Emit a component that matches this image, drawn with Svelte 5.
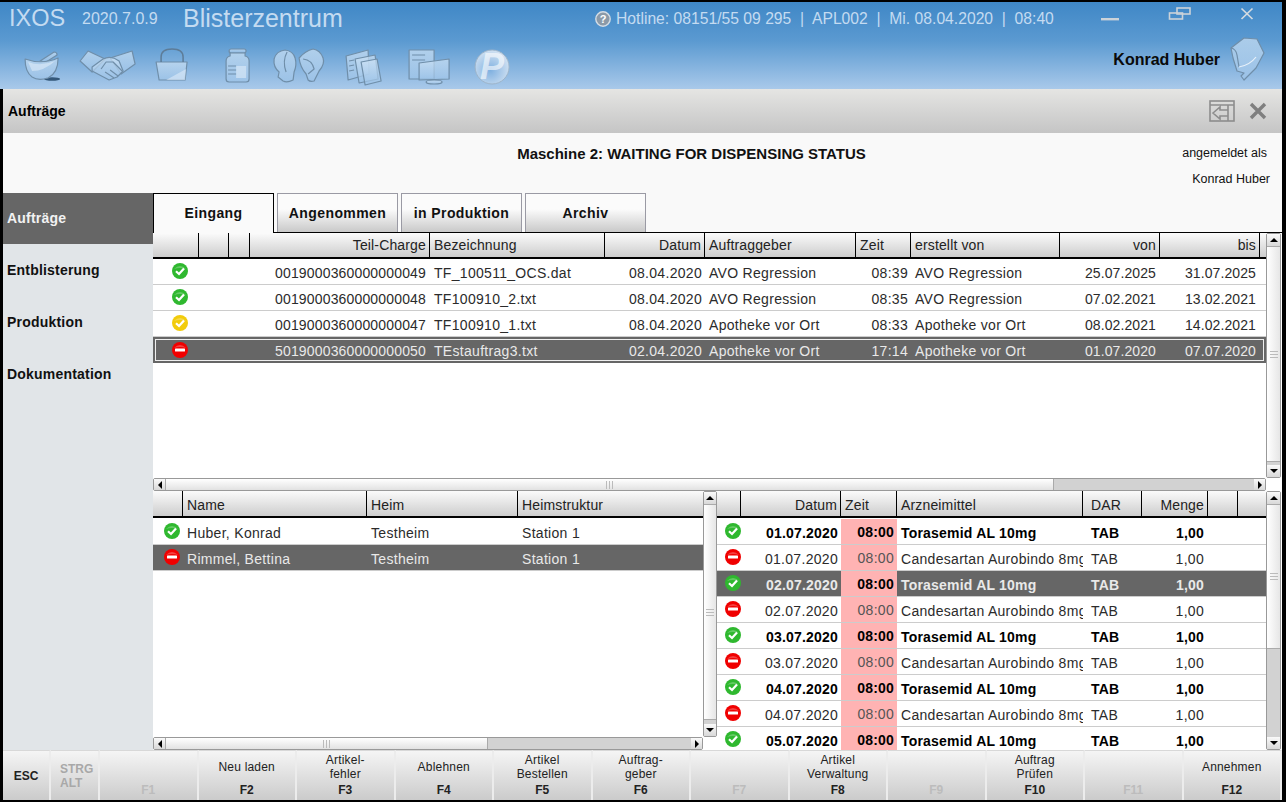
<script>
  const sideItems = ["Aufträge", "Entblisterung", "Produktion", "Dokumentation"];
  const tabs = ["Eingang", "Angenommen", "in Produktion", "Archiv"];

  const orders = [
    { st: "ok", charge: "0019000360000000049", name: "TF_100511_OCS.dat", datum: "08.04.2020", from: "AVO Regression", zeit: "08:39", by: "AVO Regression", von: "25.07.2025", bis: "31.07.2025" },
    { st: "ok", charge: "0019000360000000048", name: "TF100910_2.txt", datum: "08.04.2020", from: "AVO Regression", zeit: "08:35", by: "AVO Regression", von: "07.02.2021", bis: "13.02.2021" },
    { st: "warn", charge: "0019000360000000047", name: "TF100910_1.txt", datum: "08.04.2020", from: "Apotheke vor Ort", zeit: "08:33", by: "Apotheke vor Ort", von: "08.02.2021", bis: "14.02.2021" },
    { st: "no", charge: "5019000360000000050", name: "TEstauftrag3.txt", datum: "02.04.2020", from: "Apotheke vor Ort", zeit: "17:14", by: "Apotheke vor Ort", von: "01.07.2020", bis: "07.07.2020", sel: true }
  ];

  const patients = [
    { st: "ok", name: "Huber, Konrad", heim: "Testheim", station: "Station 1" },
    { st: "no", name: "Rimmel, Bettina", heim: "Testheim", station: "Station 1", sel: true }
  ];

  const doses = [
    { st: "ok", datum: "01.07.2020", med: "Torasemid AL 10mg", bold: true },
    { st: "no", datum: "01.07.2020", med: "Candesartan Aurobindo 8mg" },
    { st: "ok", datum: "02.07.2020", med: "Torasemid AL 10mg", bold: true, sel: true },
    { st: "no", datum: "02.07.2020", med: "Candesartan Aurobindo 8mg" },
    { st: "ok", datum: "03.07.2020", med: "Torasemid AL 10mg", bold: true },
    { st: "no", datum: "03.07.2020", med: "Candesartan Aurobindo 8mg" },
    { st: "ok", datum: "04.07.2020", med: "Torasemid AL 10mg", bold: true },
    { st: "no", datum: "04.07.2020", med: "Candesartan Aurobindo 8mg" },
    { st: "ok", datum: "05.07.2020", med: "Torasemid AL 10mg", bold: true }
  ];

  const keys = [
    { k: "F1" },
    { k: "F2", l: ["Neu laden"] },
    { k: "F3", l: ["Artikel-", "fehler"] },
    { k: "F4", l: ["Ablehnen"] },
    { k: "F5", l: ["Artikel", "Bestellen"] },
    { k: "F6", l: ["Auftrag-", "geber"] },
    { k: "F7" },
    { k: "F8", l: ["Artikel", "Verwaltung"] },
    { k: "F9" },
    { k: "F10", l: ["Auftrag", "Prüfen"] },
    { k: "F11" },
    { k: "F12", l: ["Annehmen"] }
  ];
</script>

{#snippet status(st)}
  <svg class="status" viewBox="0 0 18 18" width="18" height="18">
    <circle cx="9" cy="9" r="8" fill={st === "ok" ? "#2fb82f" : st === "warn" ? "#f2cc0c" : "#f00000"} />
    <path d="M3 7 Q9 1 15 7 Q9 5 3 7Z" fill="#fff" opacity=".25" />
    {#if st === "no"}
      <rect x="4" y="7.4" width="10" height="3.2" rx=".6" fill="#fff" />
    {:else}
      <path d="M5 9.2 L8 12 L13 6.4" fill="none" stroke="#fff" stroke-width="2.2" />
    {/if}
  </svg>
{/snippet}

{#snippet vbar(thumb)}
  <div class="vbar">
    <div class="btn"><i class="up"></i></div>
    <div class="thumb" style="height:{thumb}px"><b class="grip-h"></b></div>
    <div class="rest"></div>
    <div class="btn"><i class="down"></i></div>
  </div>
{/snippet}

{#snippet hbar(thumb)}
  <div class="hbar">
    <div class="btn"><i class="left"></i></div>
    <div class="thumb" style="width:{thumb}px"><b class="grip-v"></b></div>
    <div class="rest"></div>
    <div class="btn"><i class="right"></i></div>
  </div>
{/snippet}

<div class="app">
  <svg class="defs" width="0" height="0">
    <defs>
      <linearGradient id="glass" x1="0" y1="0" x2="0" y2="1">
        <stop offset="0" stop-color="#cfe3f5" />
        <stop offset="1" stop-color="#9cc3e8" />
      </linearGradient>
      <radialGradient id="ball" cx=".45" cy=".6" r=".7">
        <stop offset="0" stop-color="#7fb0e0" />
        <stop offset="1" stop-color="#dfeaf5" />
      </radialGradient>
    </defs>
  </svg>

  <header class="head">
    <div class="titlerow">
      <span class="brand">IXOS</span>
      <span class="version">2020.7.0.9</span>
      <span class="module">Blisterzentrum</span>
      <span class="info">
        <svg viewBox="0 0 16 16" width="16" height="16">
          <circle cx="8" cy="8" r="7.2" fill="#8b9aa8" stroke="#d5dde5" stroke-width="1.4" />
          <text x="8" y="12" text-anchor="middle" class="qmark">?</text>
        </svg>
        Hotline: 08151/55 09 295 &nbsp;|&nbsp; APL002 &nbsp;|&nbsp; Mi. 08.04.2020 &nbsp;|&nbsp; 08:40
      </span>
      <div class="winctl">
        <svg viewBox="0 0 20 14" width="20" height="14"><rect x="1" y="11" width="18" height="2.4" fill="#ccd3d9" /></svg>
        <svg viewBox="0 0 24 14" width="24" height="14" fill="none" stroke="#ccd3d9" stroke-width="1.6"><rect x="9" y="1" width="13" height="6" /><rect x="1.5" y="6" width="13" height="6" /></svg>
        <svg viewBox="0 0 14 14" width="14" height="14" stroke="#d5dbe0" stroke-width="1.7"><path d="M1.5 1.5 L12.5 12 M12.5 1.5 L1.5 12" /></svg>
      </div>
    </div>
    <div class="iconrow">
      <nav class="apps">
        <svg viewBox="0 0 64 40">
          <ellipse class="shadow" cx="42" cy="32" rx="8" ry="1.8" />
          <path d="M30 14 L44 5 Q47 5 47 8 L36 15Z" />
          <path d="M15 12 Q32 18 48 11 Q48 26 38 31 Q28 34 22 30 Q15 25 15 12Z" />
          <path class="sheen" d="M18 15 Q30 20 45 14 Q34 24 22 24Z" />
        </svg>
        <svg viewBox="0 0 64 40">
          <path d="M6 14 L14 4 L31 12 L18 25Z" />
          <path d="M36 11 L58 4 L61 17 L47 27Z" />
          <path d="M18 20 L29 12 Q37 8 45 14 L49 24 L43 30 L35 33 L18 24Z" />
          <path class="line" d="M27 22 L32 15 L39 15 L48 24 M31 25 L40 31 M36 23 L44 29" />
        </svg>
        <svg viewBox="0 0 64 40">
          <path d="M18 15 H49 L47 33 H21Z" />
          <path class="sheen" d="M28 33 L48 22 L47 33Z" />
          <path class="line thin" d="M23 15 V10 Q23 2 34 2 Q45 2 45 10 V15" />
        </svg>
        <svg viewBox="0 0 64 40">
          <rect x="26" y="2" width="17" height="4" rx="2" />
          <path d="M27 6 H42 V9 Q46 10 46 14 V32 Q46 35 43 35 H26 Q23 35 23 32 V14 Q23 10 27 9Z" />
          <rect class="sheen" x="33" y="19" width="10" height="12" />
          <path class="line" d="M25 19 H33 M25 23 H33 M25 27 H33" />
        </svg>
        <svg viewBox="0 0 64 40">
          <path d="M7 12 Q9 4 18 3 Q26 4 28 11 Q30 18 27 25 L26 33 Q20 36 16 34 L11 30 L12 25 Q6 20 7 12Z" />
          <path class="line" d="M20 5 Q15 14 19 25" />
          <path d="M32 11 Q38 4 46 2 Q53 3 56 11 Q58 17 52 24 L47 34 Q43 35 41 33 L39 27 Q33 20 32 11Z" />
          <path class="line" d="M36 12 Q45 13 47 22 L41 27" />
        </svg>
        <svg viewBox="0 0 64 40">
          <path d="M15 9 L37 3 L38 27 L17 33Z" />
          <path d="M24 12 L44 8 L47 32 L28 36Z" />
          <path d="M30 15 L46 12 L50 34 L34 38Z" />
          <path class="line" d="M18 14 L23 13 M18 19 L23 18 M18 24 L23 23" />
        </svg>
        <svg viewBox="0 0 64 40">
          <rect x="14" y="3" width="25" height="29" />
          <path class="line" d="M17 8 H30 M17 13 H30" />
          <path d="M24 16 L54 12 V32 L24 33Z" />
          <ellipse cx="39" cy="35" rx="8" ry="2" />
        </svg>
        <svg viewBox="0 0 64 40">
          <circle class="pball" cx="33" cy="20" r="17" />
          <text x="33" y="32" text-anchor="middle" class="plogo">P</text>
        </svg>
      </nav>
      <div class="user">
        <span>Konrad Huber</span>
        <svg viewBox="0 0 36 44" width="36" height="44" class="avatar">
          <path d="M1 11 L14 1 L27 2 L34 16 L26 31 L14 43 L11 39 L14 36 L7 34 L3 21Z" />
          <path class="line" d="M1 11 Q6 12 7 18 L9 30" />
          <path class="line light" d="M9 30 Q20 28 26 20" />
        </svg>
      </div>
    </div>
  </header>

  <div class="main">
    <div class="toolbar">
      <strong>Aufträge</strong>
      <div class="toolicons">
        <svg viewBox="0 0 26 22" width="26" height="22" fill="none" stroke="#8d8d8d" stroke-width="1.6">
          <rect x="1" y="1" width="24" height="20" />
          <path d="M1 5 H25 M19 5 V21 M4 13 L11 7 V10 H19 V16 H11 V19Z" />
        </svg>
        <svg viewBox="0 0 18 18" width="18" height="18" stroke="#7f7f7f" stroke-width="3.4"><path d="M2 2 L16 16 M16 2 L2 16" /></svg>
      </div>
    </div>

    <div class="statusline">
      <h1>Maschine 2: WAITING FOR DISPENSING STATUS</h1>
      <div class="login">
        <span>angemeldet als</span>
        <span>Konrad Huber</span>
      </div>
    </div>

    <div class="work">
      <aside class="side">
        {#each sideItems as item, i}
          <div class="sideitem" class:active={i === 0}>{item}</div>
        {/each}
      </aside>

      <section class="content">
        <div class="tabs">
          {#each tabs as tab, i}
            <div class="tab" class:on={i === 0}>{tab}</div>
          {/each}
        </div>

        <div class="upper">
          <div class="table">
            <div class="row header orders">
              <span></span><span></span><span></span>
              <span class="r">Teil-Charge</span><span>Bezeichnung</span><span class="r">Datum</span>
              <span>Auftraggeber</span><span>Zeit</span><span>erstellt von</span>
              <span class="r">von</span><span class="r">bis</span><span></span>
            </div>
            {#each orders as o}
              <div class="row orders" class:sel={o.sel} class:framed={o.sel}>
                <span class="ic">{@render status(o.st)}</span><span></span><span></span>
                <span class="r charge">{o.charge}</span><span>{o.name}</span><span class="r">{o.datum}</span>
                <span>{o.from}</span><span class="r">{o.zeit}</span><span>{o.by}</span>
                <span class="r range">{o.von}</span><span class="r range">{o.bis}</span><span></span>
              </div>
            {/each}
          </div>
          {@render vbar(216)}
          {@render hbar(889)}
        </div>

        <div class="lower">
          <div class="leftpane">
            <div class="leftrow">
              <div class="table">
                <div class="row header people">
                  <span></span><span>Name</span><span>Heim</span><span>Heimstruktur</span>
                </div>
                {#each patients as p}
                  <div class="row people" class:sel={p.sel}>
                    <span class="ic">{@render status(p.st)}</span><span>{p.name}</span><span>{p.heim}</span><span>{p.station}</span>
                  </div>
                {/each}
              </div>
              {@render vbar(216)}
            </div>
            {@render hbar(323)}
          </div>

          <div class="table">
            <div class="row header doses">
              <span></span><span class="r">Datum</span><span>Zeit</span><span>Arzneimittel</span>
              <span>DAR</span><span class="r">Menge</span><span></span><span></span>
            </div>
            {#each doses as d}
              <div class="row doses" class:sel={d.sel} class:bold={d.bold}>
                <span class="ic">{@render status(d.st)}</span>
                <span class="r">{d.datum}</span>
                <span class="r time">08:00</span>
                <span>{d.med}</span>
                <span>TAB</span>
                <span class="r amount">1,00</span>
                <span></span><span></span>
              </div>
            {/each}
          </div>
          {@render vbar(145)}
        </div>
      </section>
    </div>

    <footer class="keys">
      <div class="key esc">ESC</div>
      <div class="key strg">STRG<br />ALT</div>
      {#each keys as key}
        <div class="key fn" class:off={!key.l}>
          <div class="lbl">
            {#each key.l ?? [] as line}<span>{line}</span>{/each}
          </div>
          <b>{key.k}</b>
        </div>
      {/each}
    </footer>
  </div>
</div>

<style>
  :global(body) {
    margin: 0;
    background: #000;
    font-family: "Liberation Sans", Arial, sans-serif;
  }

  .app {
    width: 1286px;
    height: 802px;
    box-sizing: border-box;
    padding: 2px 4px 2px 0;
    display: flex;
    flex-direction: column;
    overflow: hidden;
    background: #000;
  }

  .defs {
    position: absolute;
  }

  .head {
    height: 87px;
    flex: none;
    background: linear-gradient(#3f87c6, #5b9ad1 45%, #a9c9ea);
  }

  .titlerow {
    height: 33px;
    display: flex;
    align-items: center;
    color: #c4dbf1;
    white-space: nowrap;
  }

  .brand {
    margin-left: 9px;
    width: 73px;
    font-size: 23.5px;
  }

  .version {
    width: 101px;
    font-size: 16px;
  }

  .module {
    width: 412px;
    font-size: 25px;
  }

  .info {
    display: flex;
    align-items: center;
    gap: 5px;
    width: 505px;
    font-size: 15.7px;
  }

  .qmark {
    font: bold 11px "Liberation Sans", sans-serif;
    fill: #fff;
  }

  .winctl {
    display: flex;
    align-items: center;
    gap: 48px;
    margin-top: -10px;
  }

  .iconrow {
    display: flex;
    justify-content: space-between;
    padding-left: 10px;
    padding-top: 10px;
    box-sizing: border-box;
    height: 54px;
  }

  .apps {
    display: flex;
    height: 40px;
    margin-top: 2px;
  }

  .apps svg {
    width: 64.2px;
    height: 40px;
    flex: none;
  }

  .apps path,
  .apps rect,
  .apps ellipse,
  .avatar path {
    fill: url(#glass);
    fill-opacity: 0.7;
    stroke: #6f8ea9;
    stroke-width: 1.2;
    stroke-linejoin: round;
  }

  .apps .shadow {
    fill: #34587a;
    fill-opacity: 1;
    stroke: none;
  }

  .apps .sheen {
    fill: #e3eff9;
    fill-opacity: 0.55;
    stroke: none;
  }

  .apps .line,
  .avatar .line {
    fill: none;
    stroke: #6f8ea9;
  }

  .avatar .light {
    stroke: #e8f1f9;
  }

  .apps .thin {
    stroke: #5d7c98;
    stroke-width: 1.5;
  }

  .pball {
    fill: url(#ball);
    stroke: #9db4c9;
    stroke-width: 1;
  }

  .plogo {
    font: italic bold 36px "Liberation Sans", sans-serif;
    fill: #fff;
    fill-opacity: 0.62;
  }

  .user {
    display: flex;
    align-items: flex-start;
    gap: 10px;
    padding-right: 16px;
    font-size: 16px;
    font-weight: bold;
    color: #0a0a0a;
  }

  .user span {
    margin-top: 6px;
  }

  .avatar {
    margin-top: -8px;
  }

  .main {
    flex: 1;
    min-height: 0;
    margin-left: 3px;
    display: flex;
    flex-direction: column;
  }

  .toolbar {
    height: 44px;
    flex: none;
    display: flex;
    align-items: center;
    justify-content: space-between;
    padding: 0 15px 0 5px;
    background: linear-gradient(#e5e5e3, #c5c5c5);
    font-size: 14px;
    color: #000;
  }

  .toolicons {
    display: flex;
    align-items: center;
    gap: 14px;
  }

  .statusline {
    height: 60px;
    flex: none;
    position: relative;
    background: #f9f9f9;
    color: #111;
  }

  .statusline h1 {
    margin: 0;
    padding: 13px 0 0 98px;
    text-align: center;
    font-size: 15px;
    line-height: 16px;
  }

  .login {
    position: absolute;
    top: 13px;
    right: 12px;
    display: flex;
    flex-direction: column;
    align-items: flex-end;
    gap: 12px;
    font-size: 12.5px;
    line-height: 14px;
    width: 100px;
  }

  .login span:first-child {
    margin-right: 3px;
  }

  .work {
    height: 557px;
    flex: none;
    display: flex;
  }

  .side {
    width: 150px;
    flex: none;
    background: #e1e5e8;
  }

  .sideitem {
    height: 52px;
    box-sizing: border-box;
    padding: 17px 0 0 4px;
    font-size: 14px;
    font-weight: bold;
    letter-spacing: 0.2px;
    color: #111;
  }

  .sideitem.active {
    height: 51px;
    margin-bottom: 1px;
    background: #666;
    color: #f2f2f2;
  }

  .content {
    flex: 1;
    min-width: 0;
    display: flex;
    flex-direction: column;
    background: #fff;
  }

  .tabs {
    height: 40px;
    flex: none;
    box-sizing: border-box;
    display: flex;
    gap: 3px;
    background: #f9f9f9;
    border-bottom: 1px solid #000;
  }

  .tab {
    width: 121px;
    height: 39px;
    box-sizing: border-box;
    border: 1px solid #9a9aa4;
    border-bottom: 0;
    display: flex;
    align-items: center;
    justify-content: center;
    font-size: 14px;
    font-weight: bold;
    letter-spacing: 0.4px;
    color: #111;
    background: linear-gradient(#fbfbfb 40%, #c9c9c9);
  }

  .tab.on {
    height: 40px;
    z-index: 1;
    border-color: #000;
    padding-bottom: 2px;
    background: #fafafa;
  }

  .upper {
    height: 258px;
    flex: none;
    display: grid;
    grid-template-columns: 1113px 15px;
    grid-template-rows: 245px 13px;
  }

  .table {
    min-width: 0;
    overflow: hidden;
    background: #fff;
  }

  .row {
    display: grid;
    height: 26px;
    box-sizing: border-box;
    align-items: center;
    border-bottom: 1px solid #ccc;
    font-size: 14px;
    letter-spacing: 0.3px;
    color: #2b2b2b;
  }

  .row > span {
    display: block;
    overflow: hidden;
    white-space: nowrap;
    padding: 2px 4px 0;
    min-width: 0;
  }

  .row .r {
    text-align: right;
    padding-right: 3px;
  }

  .row .charge {
    letter-spacing: 0.16px;
    padding-right: 4px;
  }

  .row .range {
    letter-spacing: 0.1px;
    padding-right: 4px;
  }

  .row .amount {
    padding-right: 4px;
  }

  .row .ic {
    padding: 0;
    display: flex;
    justify-content: center;
    margin-top: -1px;
  }

  .status {
    display: block;
    flex: none;
  }

  .orders {
    grid-template-columns: 46px 30px 21px 180px 175px 100px 151px 55px 149px 100px 100px 6px;
  }

  .orders .ic {
    margin-left: 18px;
    justify-content: flex-start;
  }

  .people {
    grid-template-columns: 30px 184px 151px 185px;
  }

  .people .ic {
    margin-left: 10px;
    justify-content: flex-start;
  }

  .doses {
    grid-template-columns: 24px 100px 56px 190px 55px 66px 30px 28px;
  }

  .doses .ic {
    margin-left: 7px;
    justify-content: flex-start;
  }

  .header {
    height: 26px;
    align-items: stretch;
    border-bottom: 2px solid #000;
    background: linear-gradient(#fbfbfb, #cdcdcd);
    letter-spacing: 0.15px;
    color: #222;
  }

  .row.header > span {
    padding-top: 0;
    line-height: 25px;
    border-right: 1px solid #000;
  }

  .row.header > span:last-child {
    border-right: 0;
  }

  .lower .header {
    height: 27px;
    margin-bottom: 1px;
  }

  .lower .row.header > span {
    padding-top: 1px;
    line-height: 27px;
  }

  .row.sel {
    background: #666;
    color: #e9e9e9;
  }

  .row.framed {
    outline: 1px solid #eee;
    outline-offset: -3px;
    border-bottom: 0;
  }

  .bold {
    font-weight: bold;
    letter-spacing: 0.2px;
    color: #000;
  }

  .row.doses .time {
    align-self: stretch;
    box-sizing: border-box;
    line-height: 23px;
    background: #ffb3b3;
    color: #555;
  }

  .row.doses.bold .time {
    color: #000;
  }

  .doses > span:nth-child(4) {
    padding-right: 0;
    margin-right: 4px;
  }

  .lower {
    flex: 1;
    min-height: 0;
    display: grid;
    grid-template-columns: 564px 549px 15px;
  }

  .leftpane {
    display: flex;
    flex-direction: column;
    min-height: 0;
  }

  .leftrow {
    flex: 1;
    min-height: 0;
    display: grid;
    grid-template-columns: 550px 14px;
  }

  .leftpane .hbar {
    width: 550px;
    flex: none;
  }

  .vbar,
  .hbar {
    display: flex;
    box-sizing: border-box;
    background: #d2d2d2;
    border: 1px solid #999;
    border-radius: 2px;
  }

  .vbar {
    flex-direction: column;
  }

  .hbar {
    grid-column: 1;
    height: 13px;
  }

  .btn {
    flex: none;
    display: flex;
    align-items: center;
    justify-content: center;
    background: linear-gradient(#fafafa, #d8d8d8);
  }

  .vbar .btn {
    height: 12px;
  }

  .hbar .btn {
    width: 11px;
  }

  .rest {
    flex: 1;
  }

  .thumb {
    flex: none;
    display: flex;
    align-items: center;
    justify-content: center;
  }

  .vbar .thumb {
    background: linear-gradient(90deg, #fff, #e6e6e6);
    border-top: 1px solid #aaa;
    border-bottom: 1px solid #aaa;
    box-sizing: border-box;
  }

  .hbar .thumb {
    background: linear-gradient(#fff, #e2e2e2);
    border-right: 1px solid #aaa;
    border-left: 1px solid #aaa;
    box-sizing: border-box;
  }

  .grip-h {
    width: 8px;
    height: 5px;
    border-top: 1px solid #bbb;
    border-bottom: 1px solid #bbb;
    background: linear-gradient(#bbb, #bbb) center / 100% 1px no-repeat;
  }

  .grip-v {
    width: 5px;
    height: 8px;
    border-left: 1px solid #bbb;
    border-right: 1px solid #bbb;
    background: linear-gradient(#bbb, #bbb) center / 1px 100% no-repeat;
  }

  .btn i {
    display: block;
    width: 0;
    height: 0;
    border: 4px solid transparent;
  }

  .btn .up {
    border-top: 0;
    border-bottom-color: #000;
  }

  .btn .down {
    border-bottom: 0;
    border-top-color: #000;
  }

  .btn .left {
    border-left: 0;
    border-right-color: #000;
  }

  .btn .right {
    border-right: 0;
    border-left-color: #000;
  }

  .keys {
    flex: 1;
    min-height: 0;
    display: grid;
    grid-template-columns: 48px 49px repeat(12, 1fr);
    background: #e9e9e9;
  }

  .key {
    box-sizing: border-box;
    border-right: 2px solid #ececec;
    border-top: 1px solid #d8d8d8;
    background: linear-gradient(#f5f5f5, #cbcbcb);
    font-size: 12px;
    color: #222;
  }

  .esc,
  .strg {
    display: flex;
    align-items: center;
    justify-content: center;
    font-weight: bold;
    line-height: 14px;
  }

  .strg {
    color: #a8a8a8;
    justify-content: flex-start;
    padding-left: 9px;
  }

  .fn {
    display: flex;
    flex-direction: column;
    align-items: center;
  }

  .lbl {
    flex: 1;
    display: flex;
    flex-direction: column;
    justify-content: center;
    align-items: center;
    line-height: 14px;
    letter-spacing: 0.2px;
  }

  .fn b {
    padding-bottom: 3px;
    line-height: 14px;
  }

  .fn.off b {
    color: #bcbcbc;
  }
</style>
